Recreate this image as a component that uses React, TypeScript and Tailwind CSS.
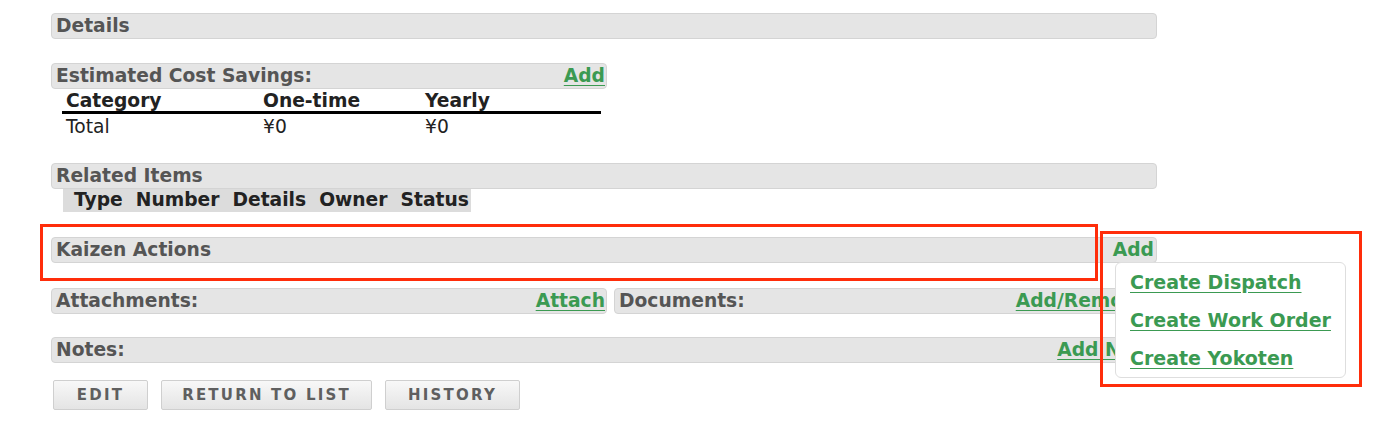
import React from "react";

const font = { fontFamily: '"DejaVu Sans", Verdana, sans-serif' };

const Bar: React.FC<{ title: string; action?: string; className?: string }> = ({
  title,
  action,
  className = "",
}) => (
  <div
    className={`flex h-[26px] items-center justify-between rounded-[4px] border border-[#d4d4d4] bg-[#e5e5e5] pl-[4px] pr-[1px] text-[18.7px] font-bold leading-none text-[#555] ${className}`}
  >
    <span>{title}</span>
    {action && (
      <a href="#" className="text-[#3b9a52] underline underline-offset-[3px]">
        {action}
      </a>
    )}
  </div>
);

const Button: React.FC<{ label: string; width: string }> = ({ label, width }) => (
  <button
    className={`${width} h-[30px] rounded-[2px] border border-[#cfcfcf] bg-gradient-to-b from-[#f8f8f8] to-[#e4e4e4] text-[15px] font-bold tracking-[2.2px] text-[#5f5f5f]`}
  >
    {label}
  </button>
);

const App: React.FC = () => {
  return (
    <div className="relative h-[444px] w-[1378px] bg-white" style={font}>
      <div className="w-[1157px] pl-[51px] pt-[13px]">
        {/* details */}
        <Bar title="Details" />

        {/* estimated cost savings */}
        <div className="mt-[24px] w-[556px]">
          <Bar title="Estimated Cost Savings:" action="Add" />
          <div className="ml-[11px] mr-[6px] text-[18.7px] text-[#222]">
            <div className="flex h-[25px] items-center border-b-[3px] border-black pl-[4px] pt-[2px] font-bold">
              <span className="w-[197px]">Category</span>
              <span className="w-[162px]">One-time</span>
              <span>Yearly</span>
            </div>
            <div className="flex h-[27px] items-center pl-[4px]">
              <span className="w-[197px]">Total</span>
              <span className="w-[162px]">¥0</span>
              <span>¥0</span>
            </div>
          </div>
        </div>

        {/* related items */}
        <div className="mt-[22px]">
          <Bar title="Related Items" />
          <div className="ml-[12px] flex h-[23px] w-[408px] items-center gap-[13px] bg-[#dcdcdc] pl-[11px] text-[18.7px] font-bold text-[#222]">
            <span>Type</span>
            <span>Number</span>
            <span>Details</span>
            <span>Owner</span>
            <span>Status</span>
          </div>
        </div>

        {/* kaizen actions */}
        <div className="mt-[25px]">
          <Bar title="Kaizen Actions" action="Add" className="[&>a]:no-underline [&>a]:pr-[1px]" />
        </div>

        {/* attachments / documents */}
        <div className="mt-[25px] flex gap-[7px]">
          <Bar title="Attachments:" action="Attach" className="w-[556px]" />
          <Bar title="Documents:" action="Add/Remove" className="flex-1 pr-[8px]" />
        </div>

        {/* notes */}
        <div className="mt-[23px]">
          <Bar title="Notes:" action="Add Note" />
        </div>

        <div className="mt-[17px] flex gap-[13px] pl-[2px]">
          <Button label="EDIT" width="w-[95px]" />
          <Button label="RETURN TO LIST" width="w-[211px]" />
          <Button label="HISTORY" width="w-[135px]" />
        </div>
      </div>

      {/* dropdown menu under kaizen Add */}
      <div className="absolute left-[1115px] top-[262px] flex w-[231px] flex-col gap-[16px] rounded-[6px] border border-[#dedede] bg-white px-[14px] pb-[8px] pt-[8px] text-[19px] font-bold leading-[22px]">
        <a href="#" className="text-[#3b9a52] underline underline-offset-[3px]">Create Dispatch</a>
        <a href="#" className="text-[#3b9a52] underline underline-offset-[3px]">Create Work Order</a>
        <a href="#" className="text-[#3b9a52] underline underline-offset-[3px]">Create Yokoten</a>
      </div>

      {/* red annotation marks */}
      <div className="pointer-events-none absolute left-[40px] top-[224px] h-[57px] w-[1058px] border-[3px] border-[#ff2d0a]" />
      <div className="pointer-events-none absolute left-[1100px] top-[231px] h-[156px] w-[262px] border-[3px] border-[#ff2d0a]" />
    </div>
  );
};

export default App;
